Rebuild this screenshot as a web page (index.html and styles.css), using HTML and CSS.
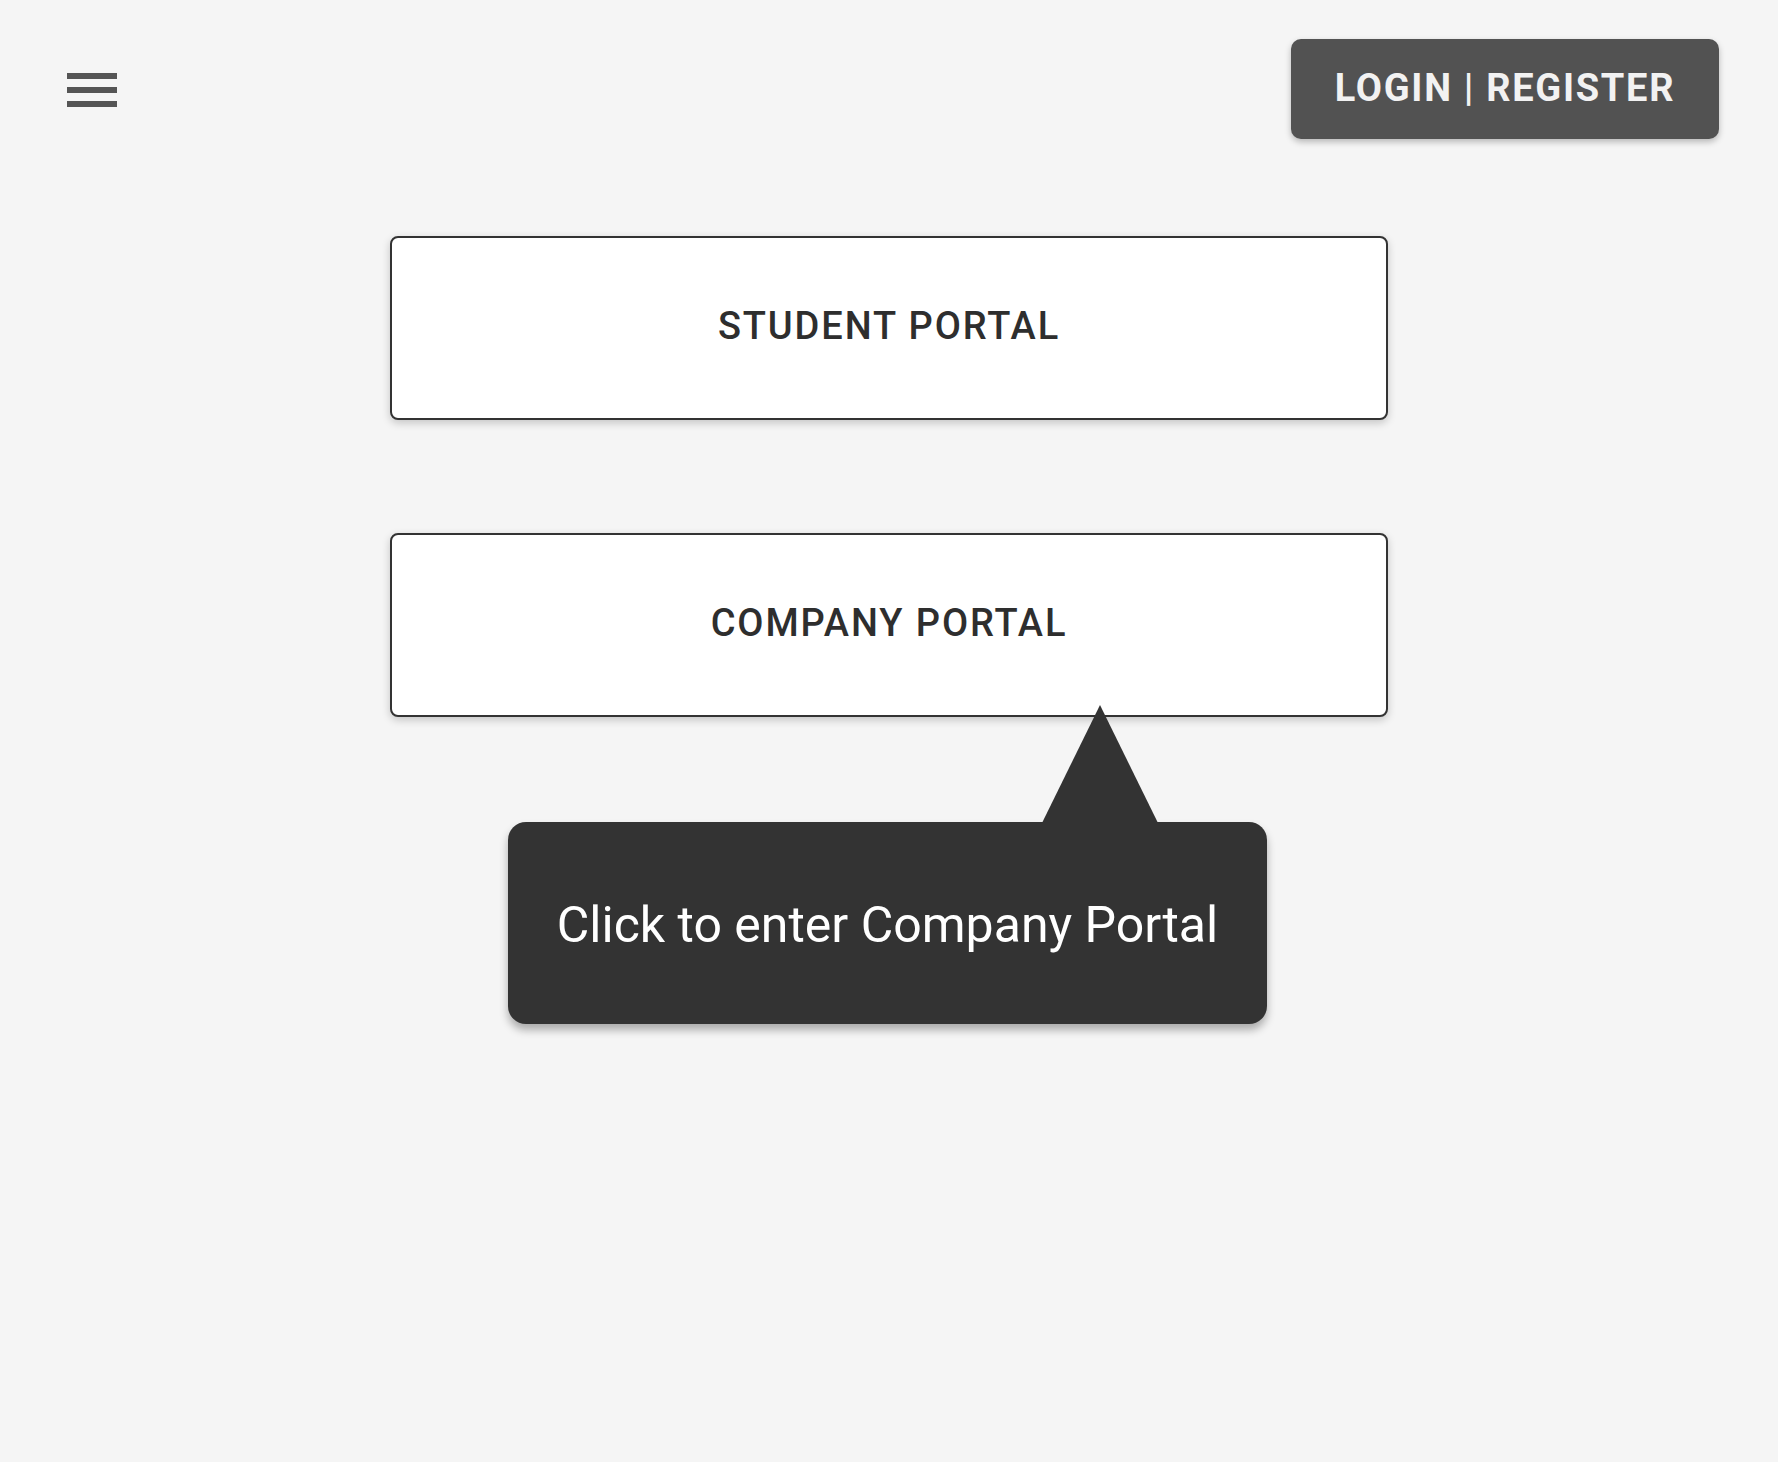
FILE: index.html
```html
<!DOCTYPE html>
<html lang="en">
<head>
<meta charset="utf-8">
<title>Portals</title>
<link rel="stylesheet" href="styles.css">
</head>
<body>
<header class="topbar">
  <button class="menu-btn" aria-label="Menu">
    <svg width="50" height="34" viewBox="0 0 50 34"><rect x="0" y="0" width="50" height="6" fill="#555"/><rect x="0" y="14" width="50" height="6" fill="#555"/><rect x="0" y="28" width="50" height="6" fill="#555"/></svg>
  </button>
  <button class="login-btn">LOGIN | REGISTER</button>
</header>
<main class="portals">
  <button class="portal">STUDENT PORTAL</button>
  <div class="portal-wrap">
    <button class="portal">COMPANY PORTAL</button>
    <div class="tooltip">Click to enter Company Portal</div>
  </div>
</main>
</body>
</html>
```
FILE: styles.css
```css
html, body {
  margin: 0;
  padding: 0;
  background: #f5f5f5;
  font-family: Roboto, "Liberation Sans", sans-serif;
  min-height: 100%;
}
body { height: 1462px; }
.topbar {
  display: flex;
  justify-content: space-between;
  align-items: center;
  padding: 39px 59px 0 67px;
}
.menu-btn {
  border: 0;
  background: none;
  padding: 0;
  margin-top: 2px;
  display: flex;
}
.login-btn {
  width: 428px;
  height: 100px;
  border: 0;
  border-radius: 10px;
  background: #525252;
  color: #f2f2f2;
  font-family: Roboto, "Liberation Sans", sans-serif;
  font-weight: 700;
  font-size: 38px;
  letter-spacing: 1.7px;
  box-shadow: 0 3px 6px rgba(0,0,0,0.25);
  padding: 0 0 3px 0;
}
.portals {
  display: flex;
  flex-direction: column;
  align-items: center;
  gap: 113px;
  margin-top: 97px;
}
.portal-wrap { position: relative; }
.portal {
  display: block;
  width: 998px;
  height: 184px;
  box-sizing: border-box;
  background: #fff;
  border: 2px solid #333;
  border-radius: 8px;
  box-shadow: 0 3px 8px rgba(0,0,0,0.2);
  color: #2e2e2e;
  font-family: Roboto, "Liberation Sans", sans-serif;
  font-weight: 500;
  font-size: 38px;
  letter-spacing: 1.9px;
  padding: 0 0 5px 0;
}
.tooltip {
  position: absolute;
  left: 118px;
  top: 289px;
  width: 759px;
  height: 202px;
  box-sizing: border-box;
  background: #333;
  color: #fff;
  border-radius: 18px;
  font-size: 50px;
  display: flex;
  align-items: center;
  justify-content: center;
  padding-top: 3px;
  box-shadow: 0 6px 8px rgba(0,0,0,0.3);
}
.tooltip::before {
  content: "";
  position: absolute;
  left: 534px;
  top: -117px;
  width: 116px;
  height: 118px;
  background: #333;
  clip-path: polygon(50% 0, 100% 100%, 0 100%);
}
```
